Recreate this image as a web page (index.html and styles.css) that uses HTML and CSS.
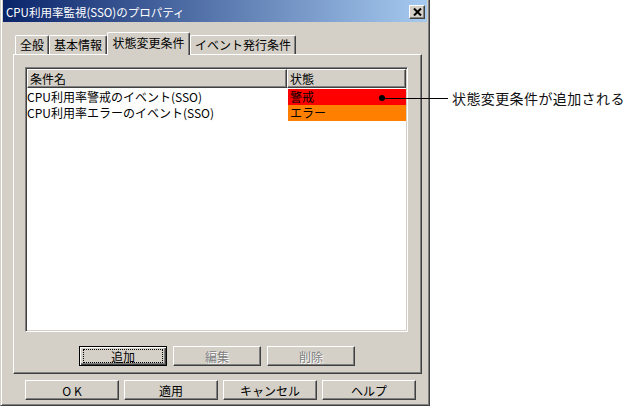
FILE: index.html
```html
<!DOCTYPE html>
<html lang="ja">
<head>
    <meta charset="UTF-8">
    <meta name="viewport" content="width=device-width, initial-scale=1.0">
    <title>CPU利用率監視(SSO)のプロパティ</title>
    <link rel="stylesheet" href="styles.css">
</head>
<body>
    <div class="page">
        <div class="dialog">
            <div class="titlebar">
                <span class="title">CPU利用率監視(SSO)のプロパティ</span>
                <span class="close">
                    <svg width="9" height="8" viewBox="0 0 9 8">
                        <path d="M1 0.5 L8 7.5 M8 0.5 L1 7.5" stroke="#000" stroke-width="2" fill="none"/>
                    </svg>
                </span>
            </div>
            <div class="content">
                <div class="tabs">
                    <div class="tab">全般</div>
                    <div class="tab">基本情報</div>
                    <div class="tab active">状態変更条件</div>
                    <div class="tab">イベント発行条件</div>
                </div>
                <div class="panel">
                    <div class="list">
                        <div class="list-head">
                            <div class="head-cell name-col">条件名</div>
                            <div class="head-cell state-col">状態</div>
                        </div>
                        <div class="list-row">
                            <div class="name-col">CPU利用率警戒のイベント(SSO)</div>
                            <div class="state-col warn">警戒</div>
                        </div>
                        <div class="list-row">
                            <div class="name-col">CPU利用率エラーのイベント(SSO)</div>
                            <div class="state-col error">エラー</div>
                        </div>
                    </div>
                    <div class="panel-buttons">
                        <button class="btn default"><span class="focus">追加</span></button>
                        <button class="btn" disabled>編集</button>
                        <button class="btn" disabled>削除</button>
                    </div>
                </div>
                <div class="dialog-buttons">
                    <button class="btn wide">O K</button>
                    <button class="btn wide">適用</button>
                    <button class="btn wide">キャンセル</button>
                    <button class="btn wide">ヘルプ</button>
                </div>
            </div>
        </div>

        <div class="callout">
            <span class="dot"></span>
            <span class="line"></span>
            <span class="callout-text">状態変更条件が追加される</span>
        </div>
    </div>
</body>
</html>
```

FILE: styles.css
```css
body {
    margin: 0;
    background: #fff;
    font-family: "Noto Sans CJK JP", "Liberation Sans", sans-serif;
    font-size: 12px;
    color: #000;
}

.page {
    position: relative;
    width: 628px;
    height: 411px;
}

.dialog {
    box-sizing: border-box;
    width: 430px;
    height: 406px;
    background: #d4d0c8;
    border: 1px solid;
    border-top: 0;
    border-color: #d4d0c8 #404040 #404040 #d4d0c8;
    box-shadow: inset 1px 0 #fff, inset -1px -1px #808080;
    padding: 0 2px 2px 2px;
}

.titlebar {
    display: flex;
    align-items: center;
    justify-content: space-between;
    height: 22px;
    padding: 0 2px 0 3px;
    background: linear-gradient(90deg, #0a246a, #a6caf0);
}

.title {
    color: #fff;
    font-size: 11.5px;
    line-height: 22px;
    padding-top: 1px;
}

.close {
    display: flex;
    align-items: center;
    justify-content: center;
    box-sizing: border-box;
    width: 16px;
    height: 14px;
    margin-top: 2px;
    background: #d4d0c8;
    border: 1px solid;
    border-color: #fff #404040 #404040 #fff;
    box-shadow: inset -1px -1px #808080;
}

.content {
    padding: 10px 5px 0 10px;
}

.tabs {
    display: flex;
    align-items: flex-end;
    height: 22px;
    padding-left: 2px;
}

.tab {
    position: relative;
    height: 18px;
    line-height: 18px;
    padding: 0 4px;
    border-top: 1px solid #fff;
    border-left: 1px solid #fff;
    border-right: 1px solid #404040;
    box-shadow: inset -1px 0 #808080;
    border-radius: 2px 2px 0 0;
    white-space: nowrap;
}

.tab.active {
    z-index: 1;
    height: 22px;
    line-height: 20px;
    padding: 0 4.5px;
    margin-bottom: -1px;
    background: #d4d0c8;
}

.panel {
    box-sizing: border-box;
    width: 409px;
    height: 320px;
    padding: 12px 0 0 11px;
    border: 1px solid;
    border-color: #fff #404040 #404040 #fff;
    box-shadow: inset -1px -1px #808080;
}

.list {
    box-sizing: border-box;
    width: 383px;
    height: 265px;
    background: #fff;
    border: 1px solid;
    border-color: #808080 #fff #fff #808080;
    box-shadow: inset 1px 1px #404040, inset -1px -1px #d4d0c8;
    padding: 1px;
}

.list-head {
    display: flex;
    height: 19px;
}

.head-cell {
    box-sizing: border-box;
    height: 19px;
    line-height: 17px;
    padding-left: 2px;
    background: #d4d0c8;
    border: 1px solid;
    border-color: #fff #404040 #404040 #fff;
    box-shadow: inset -1px -1px #808080;
}

.name-col {
    width: 260px;
    flex-shrink: 0;
    white-space: nowrap;
}

.state-col {
    flex: 1;
}

.list-row {
    display: flex;
    height: 16px;
    line-height: 16px;
}

.list-head + .list-row {
    margin-top: 1px;
}

.list-row .state-col {
    padding-left: 2px;
    margin-left: 1px;
}

.warn {
    background: #ff0000;
}

.error {
    background: #ff8000;
}

.panel-buttons {
    display: flex;
    gap: 6px;
    margin: 14px 0 0 54px;
}

.btn {
    box-sizing: border-box;
    width: 88px;
    height: 20px;
    padding: 0;
    font-family: inherit;
    font-size: 12px;
    color: #000;
    background: #d4d0c8;
    border: 1px solid;
    border-color: #fff #404040 #404040 #fff;
    box-shadow: inset -1px -1px #808080;
}

.btn:disabled {
    color: #808080;
    text-shadow: 1px 1px #fff;
}

.btn.default {
    border: 1px solid #000;
    box-shadow: inset 1px 1px #fff, inset -1px -1px #404040, inset -2px -2px #808080;
    padding: 2px 3px;
}

.focus {
    display: flex;
    align-items: center;
    justify-content: center;
    height: 100%;
    border: 1px dotted #000;
    box-sizing: border-box;
}

.dialog-buttons {
    display: flex;
    gap: 5px;
    margin: 6px 0 0 12px;
}

.btn.wide {
    width: 94px;
}

.callout {
    position: absolute;
    left: 379px;
    top: 88px;
    display: flex;
    align-items: center;
    height: 20px;
}

.dot {
    width: 6px;
    height: 6px;
    border-radius: 50%;
    background: #000;
}

.line {
    width: 66px;
    height: 1px;
    margin-left: -3px;
    background: #000;
}

.callout-text {
    margin-left: 4px;
    font-size: 14px;
    letter-spacing: 0.4px;
    color: #111;
    white-space: nowrap;
}
```
